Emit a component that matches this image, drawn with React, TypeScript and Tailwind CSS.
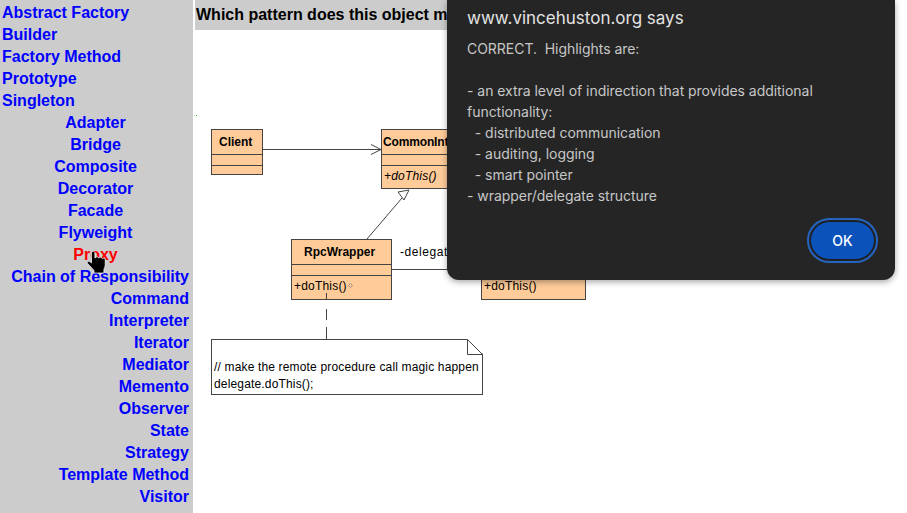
const creational = ['Abstract Factory', 'Builder', 'Factory Method', 'Prototype', 'Singleton'];
const structural = ['Adapter', 'Bridge', 'Composite', 'Decorator', 'Facade', 'Flyweight', 'Proxy'];
const behavioral = [
  'Chain of Responsibility',
  'Command',
  'Interpreter',
  'Iterator',
  'Mediator',
  'Memento',
  'Observer',
  'State',
  'Strategy',
  'Template Method',
  'Visitor',
];

const SideLink = ({ label, align }: { label: string; align: string }) => (
  <a className={`block h-[22px] leading-[22px] whitespace-nowrap ${align} ${label === 'Proxy' ? 'text-[#ff0000]' : 'text-[#0000ff]'}`}>
    {label}
  </a>
);

const UmlBox = ({
  className,
  nameClass,
  name,
  method,
  italic,
  children,
}: {
  className: string;
  nameClass?: string;
  name?: string;
  method?: string;
  italic?: boolean;
  children?: React.ReactNode;
}) => (
  <div className={`absolute flex flex-col bg-[#ffcc99] border border-[#444444] text-black text-[12px] ${className}`}>
    <div className={`h-[25px] shrink-0 border-b border-[#444444] overflow-hidden whitespace-nowrap font-bold leading-[24px] ${nameClass}`}>
      {name}
    </div>
    <div className="h-[11px] shrink-0 border-b border-[#444444]" />
    <div className={`flex items-center h-[20px] px-[2px] tracking-[0.2px] whitespace-nowrap ${italic ? 'italic' : ''}`}>
      {method}
      {children}
    </div>
  </div>
);

const HandCursor = () => (
  <svg className="absolute left-[85px] top-[250px]" width="23" height="24" viewBox="0 0 23 24">
    <path
      d="M6.5 3c0-2 3.4-2 3.4 0v5l.6-.1c.2-1.7 3-1.6 3.1.1l.5.1c.3-1.4 2.8-1.2 2.9.4l.5.2c.4-1.1 2.6-.8 2.7.8v5.6c0 1.7-.7 2.9-1.3 4.2V23H9v-2.6L2.6 13.6c-1.2-1.5.8-3.3 2.3-2l1.6 1.4z"
      fill="#000000"
      stroke="#ffffff"
      strokeWidth="0.7"
    />
  </svg>
);

const Diagram = () => (
  <div className="relative flex-1">
    <UmlBox className="left-[16px] top-[99px] w-[52px] h-[46px]" nameClass="pl-[7px]" name="Client" />
    <UmlBox className="left-[186px] top-[99px] w-[120px] h-[60px]" nameClass="pl-[1px] tracking-[-0.15px]" name="CommonInterface" method="+doThis()" italic />
    <UmlBox className="left-[96px] top-[209px] w-[101px] h-[61px]" nameClass="pl-[12px]" name="RpcWrapper" method="+doThis()">
      <svg className="ml-[1px] mb-[1px]" width="5" height="5" fill="none" stroke="#777777" strokeWidth="0.7">
        <path d="M2.5 0.5L4.5 2.5L2.5 4.5L0.5 2.5Z" />
      </svg>
    </UmlBox>
    <UmlBox className="left-[286px] top-[209px] w-[105px] h-[61px]" method="+doThis()" />
    <span className="absolute left-[205px] top-[215px] text-[12px] leading-[14px] tracking-[0.55px] text-black">-delegate</span>
    <div className="absolute left-[16px] top-[309px] w-[272px] h-[56px] border border-[#444444] bg-white px-[2px] pt-[19px] text-[12px] leading-[17px] tracking-[0.16px] text-black whitespace-nowrap">
      <div>// make the remote procedure call magic happen</div>
      <div>delegate.doThis();</div>
      <svg className="absolute right-[-1px] top-[-1px]" width="16" height="16" fill="#ffffff" stroke="#444444" strokeWidth="1">
        <path d="M0 0H16V15" stroke="none" />
        <path d="M0.5 0.5L15.5 15.5H0.5Z" />
      </svg>
    </div>
    {/* connectors go last so the dashed note line runs over the wrapper box */}
    <svg className="absolute inset-0" width="712" height="480" fill="none" stroke="#444444" strokeWidth="1">
      <rect x="1" y="85" width="1" height="1" fill="#22aa22" stroke="none" />
      <path d="M68 119.5H186" />
      <path d="M176 114.5L186 119.5L176 124.5" />
      <path d="M172 209L207 168" />
      <path d="M203 162L214 160L209 170Z" fill="#ffffff" />
      <path d="M197 239.5H300" />
      <path d="M131.5 263V269M131.5 279V290M131.5 297V309" />
    </svg>
  </div>
);

const AlertDialog = () => (
  <div className="absolute left-[447px] top-0 w-[448px] h-[280px] flex flex-col bg-[#252525] rounded-b-[12px] shadow-[0_2px_6px_rgba(0,0,0,0.35)] px-[20px] font-['Inter',sans-serif]">
    <div className="h-[38px] pt-[7px] text-[17px] leading-[22px] text-[#e3e3e3]">www.vincehuston.org says</div>
    <div className="text-[14px] leading-[21px] tracking-[-0.035px] text-[#c7c7c7] whitespace-pre-wrap">
      {`CORRECT.  Highlights are:

- an extra level of indirection that provides additional functionality:
  - distributed communication
  - auditing, logging
  - smart pointer
- wrapper/delegate structure`}
    </div>
    <div className="flex justify-end mt-[15px]">
      <button className="w-[65px] h-[39px] rounded-full bg-[#0b52ba] text-white text-[14px] font-medium outline-2 outline-offset-1 outline-[#2463c0] border border-[#1b1b1b]">
        OK
      </button>
    </div>
  </div>
);

export default function App() {
  return (
    <div className="relative flex h-screen overflow-hidden bg-white font-['Liberation_Sans',sans-serif]">
      <nav className="w-[193px] shrink-0 bg-[#cccccc] pl-[2px] pr-[4px] pt-[2px] text-[16px] font-bold">
        {creational.map((label) => (
          <SideLink key={label} label={label} align="text-left" />
        ))}
        {structural.map((label) => (
          <SideLink key={label} label={label} align="text-center" />
        ))}
        {behavioral.map((label) => (
          <SideLink key={label} label={label} align="text-right" />
        ))}
      </nav>
      <main className="flex-1 flex flex-col pl-[2px]">
        <h1 className="h-[30px] w-[500px] shrink-0 bg-[#cccccc] pl-[1px] text-[16px] leading-[30px] font-bold text-black whitespace-nowrap">
          Which pattern does this object model demonstrate?
        </h1>
        <Diagram />
      </main>
      <HandCursor />
      <AlertDialog />
    </div>
  );
}
